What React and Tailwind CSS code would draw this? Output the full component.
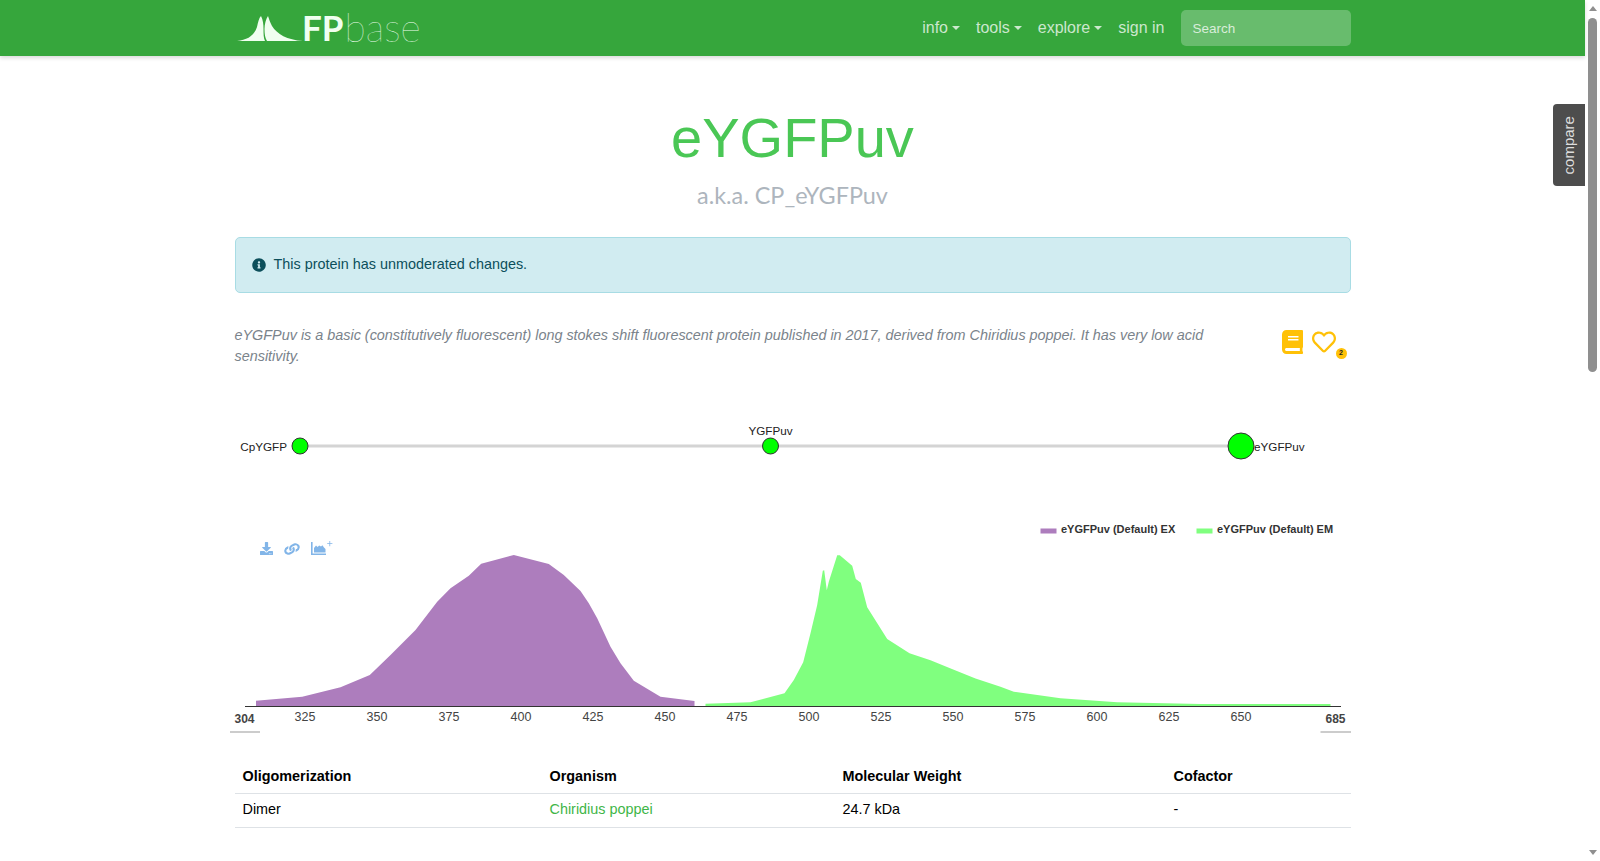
import { FaBook, FaRegHeart, FaInfoCircle, FaDownload, FaLink } from 'react-icons/fa'

const exPoints = '255.5,706 255.5,700.7 301.7,696.7 340,687.3 369.3,675 390,655 415,630 436.7,601.7 450,588.3 468.3,575.7 480.7,563.7 513.3,555 548.3,564 563.3,575 580,591 588.3,603.3 596.7,618.3 610,646.7 620,663.3 633.3,680.7 660,696.7 694,701 694,706'
const emPoints = '705,706 705,703.7 750,702.3 784,693.3 793.3,680 802.7,662.3 810,633.3 816.7,605 822.3,570.7 823.7,570.3 826.3,590.3 828.3,581.7 836.7,555.3 839.3,555.3 851.7,565.7 855.3,579 860.3,582.7 866.7,607.3 886.7,639 909,653.3 930,660.3 949,668 975,678.6 1000,686.7 1013.3,691.7 1060,698.3 1116.7,702.3 1200,704 1330,704 1330,706'
const ticks = [325, 350, 375, 400, 425, 450, 475, 500, 525, 550, 575, 600, 625, 650]

function Caret() {
  return <span className="ml-[4px] inline-block align-[3px] border-x-[4.8px] border-t-[4.8px] border-x-transparent border-t-current" />
}

function Logo() {
  return (
    <a className="ml-[2.5px] flex items-end text-[#f0fff0]">
      <svg width="66" height="25" viewBox="0 0 66 25" className="mb-[7px]">
        <path fill="#f0fff0" d="M0 25 C10 24 17 20 20 11 C21 6 22 2 24 0 C26 4 26.5 8 26.5 13 C26.5 18 26.5 22 28 25 Z" />
        <path fill="#f0fff0" d="M31 0 C32 3 33 6 35 10 C40 18 50 24 66 25 L30 25 C28 22 27.5 18 27.5 13 C27.5 8 29 3 31 0 Z" />
      </svg>
      <span className="mb-[2px] -ml-[1px] font-['Lato',sans-serif] text-[35px] leading-[38px] font-bold">FP</span>
      <span className="mb-[2px] ml-[1px] font-['Lato',sans-serif] text-[39px] leading-[38px] font-thin">base</span>
    </a>
  )
}

function Navbar() {
  return (
    <nav className="h-14 bg-[#36a63c] shadow-[0_2px_4px_rgba(0,0,0,0.15)]">
      <div className="mx-auto flex h-14 w-[1116px] items-center">
        <Logo />
        <div className="ml-auto flex items-center text-base text-white/75">
          <a className="mr-4">info<Caret /></a>
          <a className="mr-4">tools<Caret /></a>
          <a className="mr-4">explore<Caret /></a>
          <a className="mr-4">sign in</a>
          <div className="flex h-9 w-[170px] items-center rounded-[5px] bg-white/25 px-3 pt-[2px] text-[13.5px] text-white/75">Search</div>
        </div>
      </div>
    </nav>
  )
}

function Lineage() {
  return (
    <svg viewBox="234.5 410 1116 70" className="mt-[43.5px] block h-[70px] w-[1116px] overflow-visible font-['Liberation_Sans',sans-serif] text-[11.7px]">
      <line x1="300" y1="446" x2="1241" y2="446" stroke="#d4d4d4" strokeWidth="3" />
      <circle cx="299.5" cy="446" r="8" fill="#0f0" stroke="#333" />
      <circle cx="770" cy="446" r="8" fill="#0f0" stroke="#333" />
      <circle cx="1240.5" cy="446" r="13" fill="#0f0" stroke="#333" />
      <text x="286.5" y="451" textAnchor="end" fill="#222">CpYGFP</text>
      <text x="770" y="435" textAnchor="middle" fill="#222">YGFPuv</text>
      <text x="1253.5" y="451" fill="#222">eYGFPuv</text>
    </svg>
  )
}

function AddSpectrumIcon() {
  return (
    <svg width="22" height="15" viewBox="0 0 22 15" fill="currentColor">
      <path d="M0 1 H1.6 V12.4 H15 V14 H0 Z" />
      <path d="M3 11.5 V7 L5 4.6 L6.6 6 L8.2 4.4 L10 5.4 L11.4 4.2 L13 6.4 L14.5 8 V11.5 Z" />
      <path d="M18.4 0 H19.2 V2.2 H21.4 V3 H19.2 V5.2 H18.4 V3 H16.2 V2.2 H18.4 Z" />
    </svg>
  )
}

function Spectra() {
  return (
    <div className="relative mt-[30px] h-[230px] w-[1116px]">
      <svg viewBox="234.5 510 1116 230" className="block h-[230px] w-[1116px] overflow-visible font-['Liberation_Sans',sans-serif]">
        <polygon points={exPoints} fill="#ad7dbd" />
        <polygon points={emPoints} fill="#80ff7f" />
        <line x1="244.5" y1="706.5" x2="1340.5" y2="706.5" stroke="#333" />
        {ticks.map(t => (
          <text key={t} x={304.5 + (t - 325) * 2.88} y="721" textAnchor="middle" fontSize="12.5" fill="#444">{t}</text>
        ))}
        <text x="244" y="723" textAnchor="middle" fontSize="12" fontWeight="700" fill="#444">304</text>
        <line x1="229.5" y1="732" x2="259.5" y2="732" stroke="#999" />
        <text x="1335" y="723" textAnchor="middle" fontSize="12" fontWeight="700" fill="#444">685</text>
        <line x1="1320" y1="732" x2="1350.5" y2="732" stroke="#999" />
        <rect x="1040" y="528.5" width="16" height="5" fill="#ad7dbd" />
        <text x="1060.5" y="533" fontSize="11" fontWeight="700" fill="#333">eYGFPuv (Default) EX</text>
        <rect x="1196" y="528.5" width="16" height="5" fill="#80ff7f" />
        <text x="1216.5" y="533" fontSize="11" fontWeight="700" fill="#333">eYGFPuv (Default) EM</text>
      </svg>
      <div className="absolute top-[31px] left-[25.5px] flex items-center text-[#82b5e8]">
        <FaDownload className="h-[13px] w-[13px]" />
        <FaLink className="ml-[12px] h-[14px] w-[14px] rotate-[20deg]" />
        <div className="ml-[12px]"><AddSpectrumIcon /></div>
      </div>
    </div>
  )
}

function InfoTable() {
  return (
    <table className="mt-[18px] w-[1116px] table-fixed text-left text-[14.4px] text-black">
      <thead>
        <tr className="h-[35px] border-b border-[#dee2e6]">
          <th className="w-[307px] pt-[3px] pl-2 font-bold">Oligomerization</th>
          <th className="w-[293px] pt-[3px] pl-2 font-bold">Organism</th>
          <th className="w-[331px] pt-[3px] pl-2 font-bold">Molecular Weight</th>
          <th className="pt-[3px] pl-2 font-bold">Cofactor</th>
        </tr>
      </thead>
      <tbody>
        <tr className="h-[34px] border-b border-[#dee2e6]">
          <td className="pb-[1px] pl-2">Dimer</td>
          <td className="pb-[1px] pl-2 text-[#3fb648]">Chiridius poppei</td>
          <td className="pb-[1px] pl-2">24.7 kDa</td>
          <td className="pb-[1px] pl-2">-</td>
        </tr>
      </tbody>
    </table>
  )
}

function Scrollbar() {
  return (
    <div className="flex h-[861px] w-[15px] flex-col items-center bg-white">
      <span className="mt-[6px] h-0 w-0 border-x-[4.5px] border-b-[5px] border-x-transparent border-b-[#8f8f8f]" />
      <div className="mt-[7px] h-[354px] w-[9px] rounded-full bg-[#8f8f8f]" />
      <span className="mt-auto mb-[6px] h-0 w-0 border-x-[4.5px] border-t-[5px] border-x-transparent border-t-[#8f8f8f]" />
    </div>
  )
}

export default function App() {
  return (
    <div className="flex h-[861px] overflow-hidden bg-white font-['Liberation_Sans',sans-serif]">
      <div className="relative w-[1585px]">
        <Navbar />

        <div className="absolute top-[104px] right-0 flex h-[82px] w-8 items-center justify-center rounded-l bg-[#4d4d4d]">
          <span className="-rotate-90 text-[15px] text-[#ddd]">compare</span>
        </div>

        <main className="mx-auto w-[1116px]">
          <h1 className="mt-[48px] text-center text-[56px] leading-[67px] text-[#4ac755]">eYGFPuv</h1>
          <h2 className="mt-[9px] text-center font-['Lato',sans-serif] text-[23.4px] leading-[30px] text-[#adb5bd]">a.k.a. CP_eYGFPuv</h2>

          <div className="mt-[27px] flex h-14 items-center rounded-[5px] border border-[#a8dce4] bg-[#d1ecf1] pb-[1px] pl-[16px] text-[14.4px] text-[#0c4f5b]">
            <FaInfoCircle className="mr-2 h-[14px] w-[14px]" />
            This protein has unmoderated changes.
          </div>

          <div className="mt-[31.5px] flex">
            <p className="w-[1010px] text-[14.4px] leading-[21px] text-[#7a838b] italic">
              eYGFPuv is a basic (constitutively fluorescent) long stokes shift fluorescent protein published in 2017, derived from Chiridius poppei. It has very low acid sensitivity.
            </p>
            <div className="relative mt-[5px] ml-[37px] flex h-7 items-start text-[#ffc107]">
              <FaBook className="h-6 w-[21px]" />
              <FaRegHeart className="ml-[9px] h-6 w-6" />
              <span className="absolute top-[18px] left-[54px] flex h-[11px] w-[11px] items-center justify-center rounded-full bg-[#ffc107] text-[7px] font-bold text-[#222]">2</span>
            </div>
          </div>

          <Lineage />
          <Spectra />
          <InfoTable />
        </main>
      </div>
      <Scrollbar />
    </div>
  )
}
